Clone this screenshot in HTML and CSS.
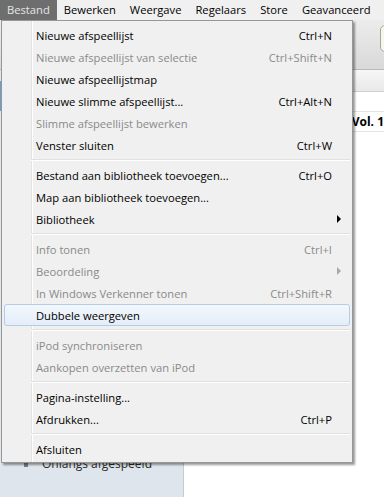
FILE: index.html
```html
<html>
<head>
    <meta charset="UTF-8">
    <title>iTunes - Bestand</title>
    <link rel="stylesheet" href="styles.css">
</head>
<body>
<div class="menubar">
    <span class="mb-item open">Bestand</span>
    <span class="mb-item">Bewerken</span>
    <span class="mb-item">Weergave</span>
    <span class="mb-item">Regelaars</span>
    <span class="mb-item">Store</span>
    <span class="mb-item">Geavanceerd</span>
</div>
<div class="toolbar">
    <div class="lcd"></div>
</div>
<div class="content">
    <div class="sidebar">
        <div class="side-sel"></div>
        <div class="side-item">
            <svg class="side-icon" width="8" height="10" viewBox="0 0 8 10"><path d="M1 2h6v2H1zM2 5h4v4H2z" fill="#7a7f86"/></svg>
            Onlangs afgespeeld
        </div>
    </div>
    <div class="main">
        <div class="colhead"></div>
        <div class="row"></div>
        <div class="row"><span class="album">Vol. 1</span></div>
    </div>
</div>

<!-- geopend menu Bestand -->
<div class="menu">
    <div class="item"><span>Nieuwe afspeellijst</span><span class="key">Ctrl+N</span></div>
    <div class="item off"><span>Nieuwe afspeellijst van selectie</span><span class="key">Ctrl+Shift+N</span></div>
    <div class="item"><span>Nieuwe afspeellijstmap</span></div>
    <div class="item"><span>Nieuwe slimme afspeellijst...</span><span class="key">Ctrl+Alt+N</span></div>
    <div class="item off"><span>Slimme afspeellijst bewerken</span></div>
    <div class="item"><span>Venster sluiten</span><span class="key">Ctrl+W</span></div>
    <div class="sep"></div>
    <div class="item"><span>Bestand aan bibliotheek toevoegen...</span><span class="key">Ctrl+O</span></div>
    <div class="item"><span>Map aan bibliotheek toevoegen...</span></div>
    <div class="item"><span>Bibliotheek</span><span class="arrow"></span></div>
    <div class="sep"></div>
    <div class="item off"><span>Info tonen</span><span class="key">Ctrl+I</span></div>
    <div class="item off"><span>Beoordeling</span><span class="arrow"></span></div>
    <div class="item off"><span>In Windows Verkenner tonen</span><span class="key">Ctrl+Shift+R</span></div>
    <div class="item hover"><span>Dubbele weergeven</span></div>
    <div class="sep"></div>
    <div class="item off"><span>iPod synchroniseren</span></div>
    <div class="item off"><span>Aankopen overzetten van iPod</span></div>
    <div class="sep"></div>
    <div class="item"><span>Pagina-instelling...</span></div>
    <div class="item"><span>Afdrukken...</span><span class="key">Ctrl+P</span></div>
    <div class="sep"></div>
    <div class="item"><span>Afsluiten</span></div>
</div>
</body>
</html>
```

FILE: styles.css
```css
*{
    padding: 0;
    margin: 0;
    box-sizing: border-box;
}
body{
    width: 384px;
    height: 497px;
    overflow: hidden;
    position: relative;
    background: #fff;
    font-family: "Open Sans", "Noto Sans", sans-serif;
    font-size: 11.2px;
    color: #000;
}
.menubar{
    display: flex;
    height: 20px;
    background: #f0f0f0;
    white-space: nowrap;
}
.mb-item{
    line-height: 20px;
    padding: 0 7px;
}
.mb-item.open{
    background: #6e6e6e;
    color: #e6e6e6;
}
.toolbar{
    height: 50px;
    background: linear-gradient(#ececec, #d9d9d9);
    border-bottom: 1px solid #b9b9b9;
    display: flex;
    justify-content: flex-end;
    align-items: flex-start;
    padding-top: 5px;
}
.lcd{
    width: 10px;
    height: 27px;
    margin-right: -6px;
    background: #f6f6ea;
    border: 1px solid #a8a89a;
    border-radius: 5px;
}
.content{
    display: flex;
    height: 427px;
}
.sidebar{
    width: 186px;
    background: #dfe5ec;
    border-right: 1px solid #c5cbd2;
    padding-top: 11px;
}
.side-sel{
    height: 30px;
    background: #6b9bd0;
}
.side-item{
    display: flex;
    align-items: center;
    gap: 12px;
    height: 20px;
    margin-top: 342px;
    padding-left: 22px;
    font-size: 12px;
    color: #2a2a2a;
}
.main{
    flex: 1;
}
.colhead{
    height: 22px;
    background: linear-gradient(#f7f7f7, #e9e9e9);
    border-bottom: 1px solid #cfcfcf;
}
.row{
    height: 20px;
    line-height: 19px;
    border-bottom: 1px solid #e4e4e4;
    padding-left: 168px;
    white-space: nowrap;
    overflow: hidden;
}
.album{
    font-weight: bold;
    font-size: 12px;
}

/* het opengeklapte menu ligt over het venster */
.menu{
    position: absolute;
    left: 1px;
    top: 20px;
    width: 352px;
    background: #f0f0f0;
    border: 1px solid #979797;
    padding: 3px 2px 2px 2px;
    box-shadow: 2px 2px 2px rgba(0, 0, 0, 0.4);
}
.menu::before{
    content: "";
    position: absolute;
    left: 29px;
    top: 0;
    bottom: 0;
    width: 1px;
    background: #e2e3e3;
    border-right: 1px solid #fff;
    box-sizing: content-box;
}
.item{
    position: relative;
    display: flex;
    align-items: center;
    height: 22px;
    padding: 0 9px 0 32px;
    white-space: nowrap;
}
.item.off{
    color: #8a8a8a;
}
.item.hover{
    background: linear-gradient(#f3f7fc, #e4edf8);
    border: 1px solid #b3cde9;
    border-radius: 3px;
    padding-left: 31px;
}
.key{
    margin-left: auto;
    margin-right: 9px;
}
.arrow{
    margin-left: auto;
    width: 0;
    height: 0;
    border-left: 4px solid #000;
    border-top: 4px solid transparent;
    border-bottom: 4px solid transparent;
}
.item.off .arrow{
    border-left-color: #a8a8a8;
}
.sep{
    position: relative;
    height: 1px;
    margin: 3px 0 3px 27px;
    background: #e0e0e0;
    border-bottom: 1px solid #fff;
    box-sizing: content-box;
}
```
